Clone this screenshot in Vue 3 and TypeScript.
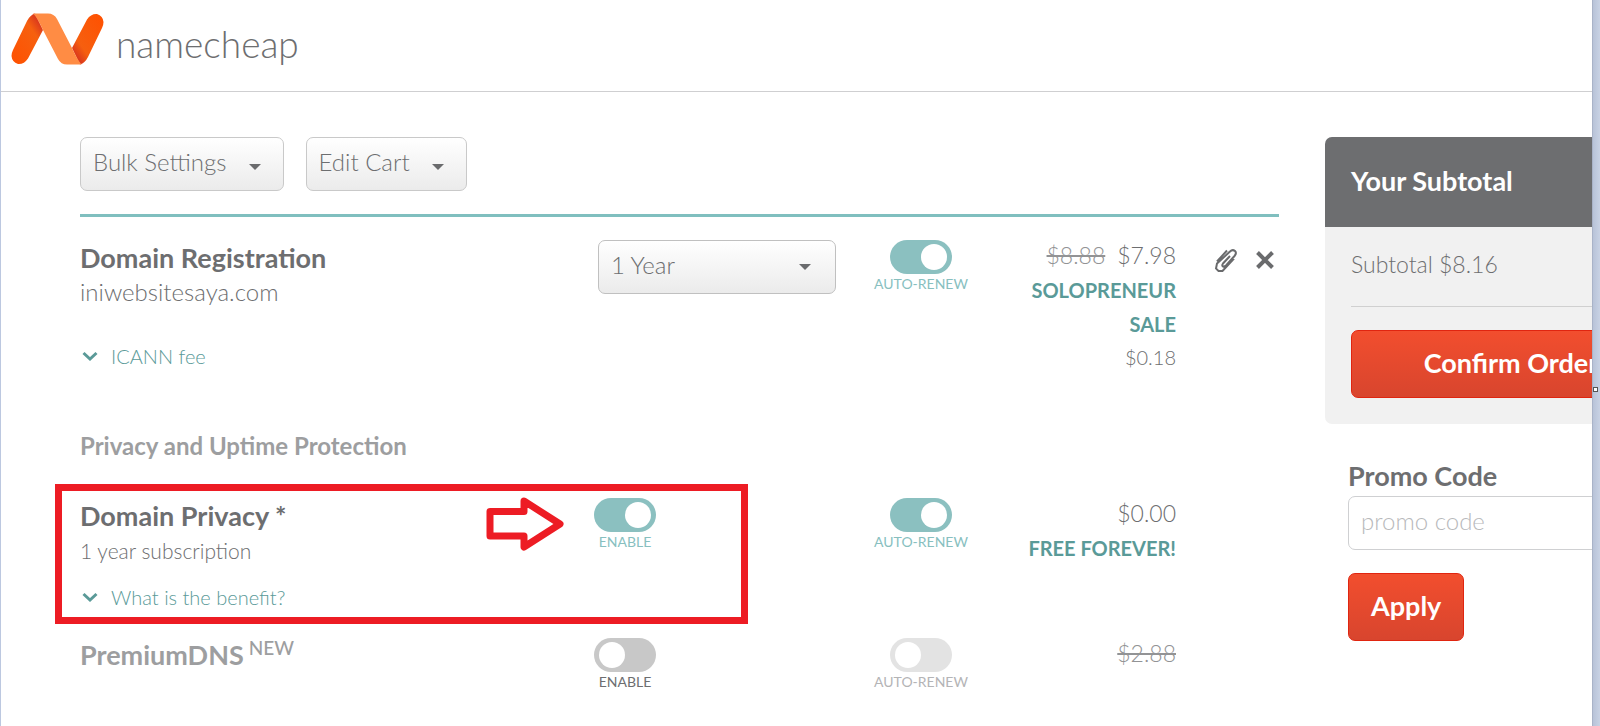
<script setup lang="ts">
import { ref } from 'vue'

interface Toggle {
  id: string
  on: boolean
}

const term = ref('1 Year')
const promo = ref('')
const menus = ['Bulk Settings', 'Edit Cart']

const registrationRenew = ref<Toggle>({ id: 'registration-renew', on: true })
const privacyEnable = ref<Toggle>({ id: 'privacy-enable', on: true })
const privacyRenew = ref<Toggle>({ id: 'privacy-renew', on: true })
const dnsEnable = ref<Toggle>({ id: 'dns-enable', on: false })
const dnsRenew = ref<Toggle>({ id: 'dns-renew', on: false })
</script>

<template>
  <div class="frame">
    <div class="page">
      <header class="top">
        <a href="#" class="brand" aria-label="namecheap">
          <svg class="mark" viewBox="0 0 93 52" aria-hidden="true">
            <defs>
              <linearGradient id="leftBar" x1="0" y1="1" x2="0.9" y2="0">
                <stop offset="0" stop-color="#ff5000" />
                <stop offset="0.7" stop-color="#f6600f" />
                <stop offset="1" stop-color="#cc2424" />
              </linearGradient>
              <linearGradient id="rightBar" x1="1" y1="0" x2="0.1" y2="1">
                <stop offset="0" stop-color="#ff5000" />
                <stop offset="0.7" stop-color="#f65f0f" />
                <stop offset="1" stop-color="#cc2424" />
              </linearGradient>
            </defs>
            <path d="M24 0.500 L32 17 L17 45.500 Q13 51.500 7 51 Q1 49 0.500 43 Q0.500 40 2 37 L16 8 Q19 2 24 0.500Z" fill="url(#leftBar)" />
            <path d="M69 51.500 L61 35 L76 6.500 Q80 0.500 86 1 Q92 3 92.500 9 Q92.500 12 91 15 L77 44 Q74 50 69 51.500Z" fill="url(#rightBar)" />
            <path d="M22 0.500 H37 Q43 0.500 46 6 L61 35 Q66 46 70.500 51.500 H56 Q50 51.500 47 46 L32 17 Q26 4 22 0.500Z" fill="#ff8c44" />
          </svg>
          <span class="wordmark">namecheap</span>
        </a>
      </header>

      <div class="content">
        <main class="cart">
          <div class="toolbar">
            <button v-for="menu in menus" :key="menu" type="button" class="menu">
              {{ menu }}
              <svg class="caret" viewBox="0 0 12 6" aria-hidden="true"><path d="M0 0H12L6 6Z" /></svg>
            </button>
          </div>

          <section class="item first">
            <div class="info">
              <h2>Domain Registration</h2>
              <p class="domain">iniwebsitesaya.com</p>
              <a href="#" class="more fee">
                <svg class="chevron" viewBox="0 0 16 11" aria-hidden="true"><path d="M1.500 2L8 8L14.500 2" /></svg>
                ICANN fee
              </a>
            </div>
            <div class="option">
              <span class="term">
                <select v-model="term" aria-label="Registration term">
                  <option>1 Year</option>
                  <option>2 Years</option>
                </select>
                <svg class="caret" viewBox="0 0 12 6" aria-hidden="true"><path d="M0 0H12L6 6Z" /></svg>
              </span>
            </div>
            <div class="renew">
              <label class="switch" :for="registrationRenew.id">
                <input :id="registrationRenew.id" v-model="registrationRenew.on" type="checkbox" />
                <span>AUTO-RENEW</span>
              </label>
            </div>
            <div class="price">
              <p class="amount"><s>$8.88</s><span>$7.98</span></p>
              <p class="deal">SOLOPRENEUR SALE</p>
              <p class="small">$0.18</p>
            </div>
            <div class="actions">
              <button type="button" aria-label="Add note">
                <svg class="clip" viewBox="0 0 24 24" aria-hidden="true">
                  <path d="M16 8L9 15.500Q7.500 17.500 9 18.500Q10.500 19 12 17.500L20.500 8Q23 5 21 3Q18.500 1 16 3.500L3 15.500L2 20.500L4.500 23H8.500L20 10.500M13 2.500L3 13.500" />
                </svg>
              </button>
              <button type="button" aria-label="Remove">
                <svg class="cross" viewBox="0 0 18 18" aria-hidden="true"><path d="M1.500 1.500L16.500 16.500M16.500 1.500L1.500 16.500" /></svg>
              </button>
            </div>
          </section>

          <h3 class="group">Privacy and Uptime Protection</h3>

          <section class="item privacy">
            <div class="highlight" aria-hidden="true"></div>
            <svg class="pointer" viewBox="0 0 78 54" aria-hidden="true">
              <path d="M4 14.500H38V4L74 27L38 50V39H4Z" />
            </svg>
            <div class="info">
              <h2>Domain Privacy *</h2>
              <p class="period">1 year subscription</p>
              <a href="#" class="more">
                <svg class="chevron" viewBox="0 0 16 11" aria-hidden="true"><path d="M1.500 2L8 8L14.500 2" /></svg>
                What is the benefit?
              </a>
            </div>
            <div class="option">
              <label class="switch" :for="privacyEnable.id">
                <input :id="privacyEnable.id" v-model="privacyEnable.on" type="checkbox" />
                <span>ENABLE</span>
              </label>
            </div>
            <div class="renew">
              <label class="switch" :for="privacyRenew.id">
                <input :id="privacyRenew.id" v-model="privacyRenew.on" type="checkbox" />
                <span>AUTO-RENEW</span>
              </label>
            </div>
            <div class="price">
              <p class="amount">$0.00</p>
              <p class="deal">FREE FOREVER!</p>
            </div>
          </section>

          <section class="item dns">
            <div class="info">
              <h2 class="muted">PremiumDNS<sup>NEW</sup></h2>
            </div>
            <div class="option">
              <label class="switch off" :for="dnsEnable.id">
                <input :id="dnsEnable.id" v-model="dnsEnable.on" type="checkbox" />
                <span>ENABLE</span>
              </label>
            </div>
            <div class="renew">
              <label class="switch disabled" :for="dnsRenew.id">
                <input :id="dnsRenew.id" v-model="dnsRenew.on" type="checkbox" disabled />
                <span>AUTO-RENEW</span>
              </label>
            </div>
            <div class="price">
              <p class="amount"><s>$2.88</s></p>
            </div>
          </section>
        </main>

        <aside class="side">
          <section class="summary">
            <h2>Your Subtotal</h2>
            <div class="body">
              <p>Subtotal $8.16</p>
              <button type="button" class="cta">Confirm Order</button>
            </div>
          </section>
          <form class="promo" @submit.prevent>
            <label for="promo">Promo Code</label>
            <input id="promo" v-model="promo" type="text" placeholder="promo code" />
            <button type="submit" class="cta">Apply</button>
          </form>
        </aside>
      </div>
    </div>
    <div class="edge"><i class="grip"></i></div>
  </div>
</template>

<style>
body {
  margin: 0;
  background: #fff;
}
</style>

<style scoped>
* {
  box-sizing: border-box;
}

.frame {
  display: flex;
  height: 100vh;
  overflow: hidden;
  border-left: 1px solid #bcc8e0;
  background: #fff;
  color: #6d6e70;
  font-family: Lato, 'Open Sans', sans-serif;
  font-size: 24px;
  font-weight: 300;
  line-height: 34px;
}

h2,
h3,
p {
  margin: 0;
}

button,
input,
select {
  font: inherit;
  color: inherit;
}

a {
  color: #5a9a98;
  text-decoration: none;
}

.page {
  flex: 1;
  min-width: 0;
  overflow: hidden;
}

.top {
  height: 92px;
  padding: 13px 0 0 10px;
  border-bottom: 1px solid #cfcfd1;
}

.brand {
  display: flex;
  gap: 12px;
  color: #6d6e70;
}

.mark {
  width: 93px;
  height: 52px;
}

.wordmark {
  padding-top: 7px;
  font-size: 37px;
  line-height: 48px;
}

.content {
  display: flex;
  gap: 46px;
  padding: 45px 0 0 79px;
}

.cart {
  flex: 1;
  min-width: 0;
}

.toolbar {
  display: flex;
  gap: 22px;
  padding-bottom: 23px;
  border-bottom: 3px solid #80bfbf;
}

.menu {
  display: flex;
  align-items: center;
  gap: 22px;
  height: 54px;
  padding: 0 22px 4px 12px;
  border: 1px solid #c9c9c9;
  border-radius: 7px;
  background: linear-gradient(#fff, #ebebeb);
}

.caret {
  width: 12px;
  height: 6px;
  fill: #6a6b6d;
}

.menu .caret {
  margin-top: 10px;
}

.item {
  position: relative;
  display: grid;
  grid-template-columns: minmax(0, 1fr) 242px 170px 170px 103px;
}

.first {
  padding-top: 23px;
}

.dns {
  padding-top: 24px;
}

.first .info,
.privacy .info {
  padding-top: 1px;
}

.item h2 {
  font-size: 27px;
  font-weight: 700;
}

.period {
  padding-top: 1px;
  font-size: 21px;
}

.more {
  display: flex;
  align-items: center;
  gap: 13px;
  margin-top: 12px;
  padding-left: 2px;
  font-size: 20px;
}

.fee {
  margin-top: 30px;
}

.chevron {
  width: 16px;
  height: 11px;
  fill: none;
  stroke: #5a9a98;
  stroke-width: 3;
}

.group {
  margin: 56px 0 35px;
  color: #9d9ea0;
  font-size: 24px;
  font-weight: 700;
}

.item h2.muted {
  color: #9d9ea0;
}

.muted sup {
  margin-left: 5px;
  font-size: 19px;
  font-weight: 500;
  line-height: 20px;
}

.term {
  position: relative;
  display: block;
  margin-left: 4px;
}

.term select {
  width: 100%;
  height: 54px;
  padding: 0 40px 4px 12px;
  border: 1px solid #c0c0c0;
  border-radius: 7px;
  background: linear-gradient(#fff, #ebebeb);
  appearance: none;
}

.term .caret {
  position: absolute;
  top: 24px;
  right: 25px;
  pointer-events: none;
}

.switch {
  display: inline-flex;
  flex-direction: column;
  align-items: center;
  min-width: 62px;
  color: #88bfbf;
  font-size: 14px;
  font-weight: 400;
  line-height: 20px;
}

.renew {
  display: flex;
  justify-content: center;
}

.switch input {
  width: 62px;
  height: 34px;
  margin: 0;
  padding: 4px 5px;
  display: flex;
  justify-content: flex-start;
  border-radius: 17px;
  background: #c8c8c8;
  appearance: none;
}

.switch input::before {
  width: 26px;
  height: 26px;
  border-radius: 50%;
  background: #fff;
  content: '';
}

.switch input:checked {
  justify-content: flex-end;
  background: #8bc0c0;
}

.switch.off {
  color: #6d6e70;
}

.switch.disabled {
  color: #b4b4b6;
}

.switch.disabled input {
  background: #e3e3e3;
}

.price {
  margin-top: -2px;
  text-align: right;
}

.amount {
  font-size: 23px;
}

.amount span {
  margin-left: 12px;
}

.price s {
  color: #929395;
}

.deal {
  padding-top: 1px;
  color: #5a9a98;
  font-size: 20px;
  font-weight: 700;
}

.small {
  font-size: 20px;
  line-height: 32px;
}

.actions {
  display: flex;
  align-items: flex-start;
  gap: 18px;
  padding: 8px 0 0 38px;
}

.actions button {
  display: flex;
  padding: 0;
  border: 0;
  background: none;
}

.clip {
  width: 24px;
  height: 24px;
  fill: none;
  stroke: #6a6b6d;
  stroke-width: 2;
}

.cross {
  width: 18px;
  height: 18px;
  margin-top: 3px;
  fill: none;
  stroke: #6a6b6d;
  stroke-width: 4;
}

.highlight {
  position: absolute;
  top: -14px;
  bottom: -10px;
  left: -25px;
  width: 693px;
  border: 7px solid #ed1c24;
  pointer-events: none;
}

.pointer {
  position: absolute;
  top: -1px;
  left: 406px;
  width: 78px;
  height: 54px;
  fill: none;
  stroke: #ed1c24;
  stroke-width: 7;
  stroke-linejoin: round;
}

.side {
  flex: none;
  width: 267px;
}

.summary,
.promo {
  width: 372px;
}

.summary {
  overflow: hidden;
  border-radius: 7px;
  background: #f1f1f1;
}

.summary h2 {
  height: 90px;
  padding: 27px 26px;
  background: #6d6e70;
  color: #fff;
  font-size: 27px;
  font-weight: 700;
}

.summary .body {
  padding: 0 26px 26px;
}

.summary p {
  height: 80px;
  padding-top: 20px;
  border-bottom: 1px solid #d0d0d0;
  font-size: 23px;
}

.cta {
  height: 68px;
  padding: 0 22px 2px;
  border: 1px solid #e02510;
  border-radius: 7px;
  background: linear-gradient(#f24e2e, #d8452e);
  color: #fff;
  font-size: 27px;
  font-weight: 700;
}

.summary .cta {
  display: block;
  width: 100%;
  margin-top: 23px;
}

.promo {
  display: flex;
  flex-direction: column;
  align-items: flex-start;
  padding: 35px 26px 0 23px;
}

.promo label {
  font-size: 27px;
  font-weight: 700;
}

.promo input {
  width: 100%;
  height: 54px;
  margin: 3px 0 23px;
  padding: 0 12px 6px;
  border: 1px solid #cfd0d2;
  border-radius: 7px;
  background: #fff;
}

.promo input::placeholder {
  color: #b8b9bb;
  opacity: 1;
}

.edge {
  flex: none;
  width: 8px;
  padding-top: 387px;
  border-left: 1px solid #a9b3c8;
  background: linear-gradient(90deg, #b8c3d8, #c8d2e4);
}

.grip {
  display: block;
  width: 5px;
  height: 5px;
  border: 1px solid #555;
  background: #fff;
}
</style>
